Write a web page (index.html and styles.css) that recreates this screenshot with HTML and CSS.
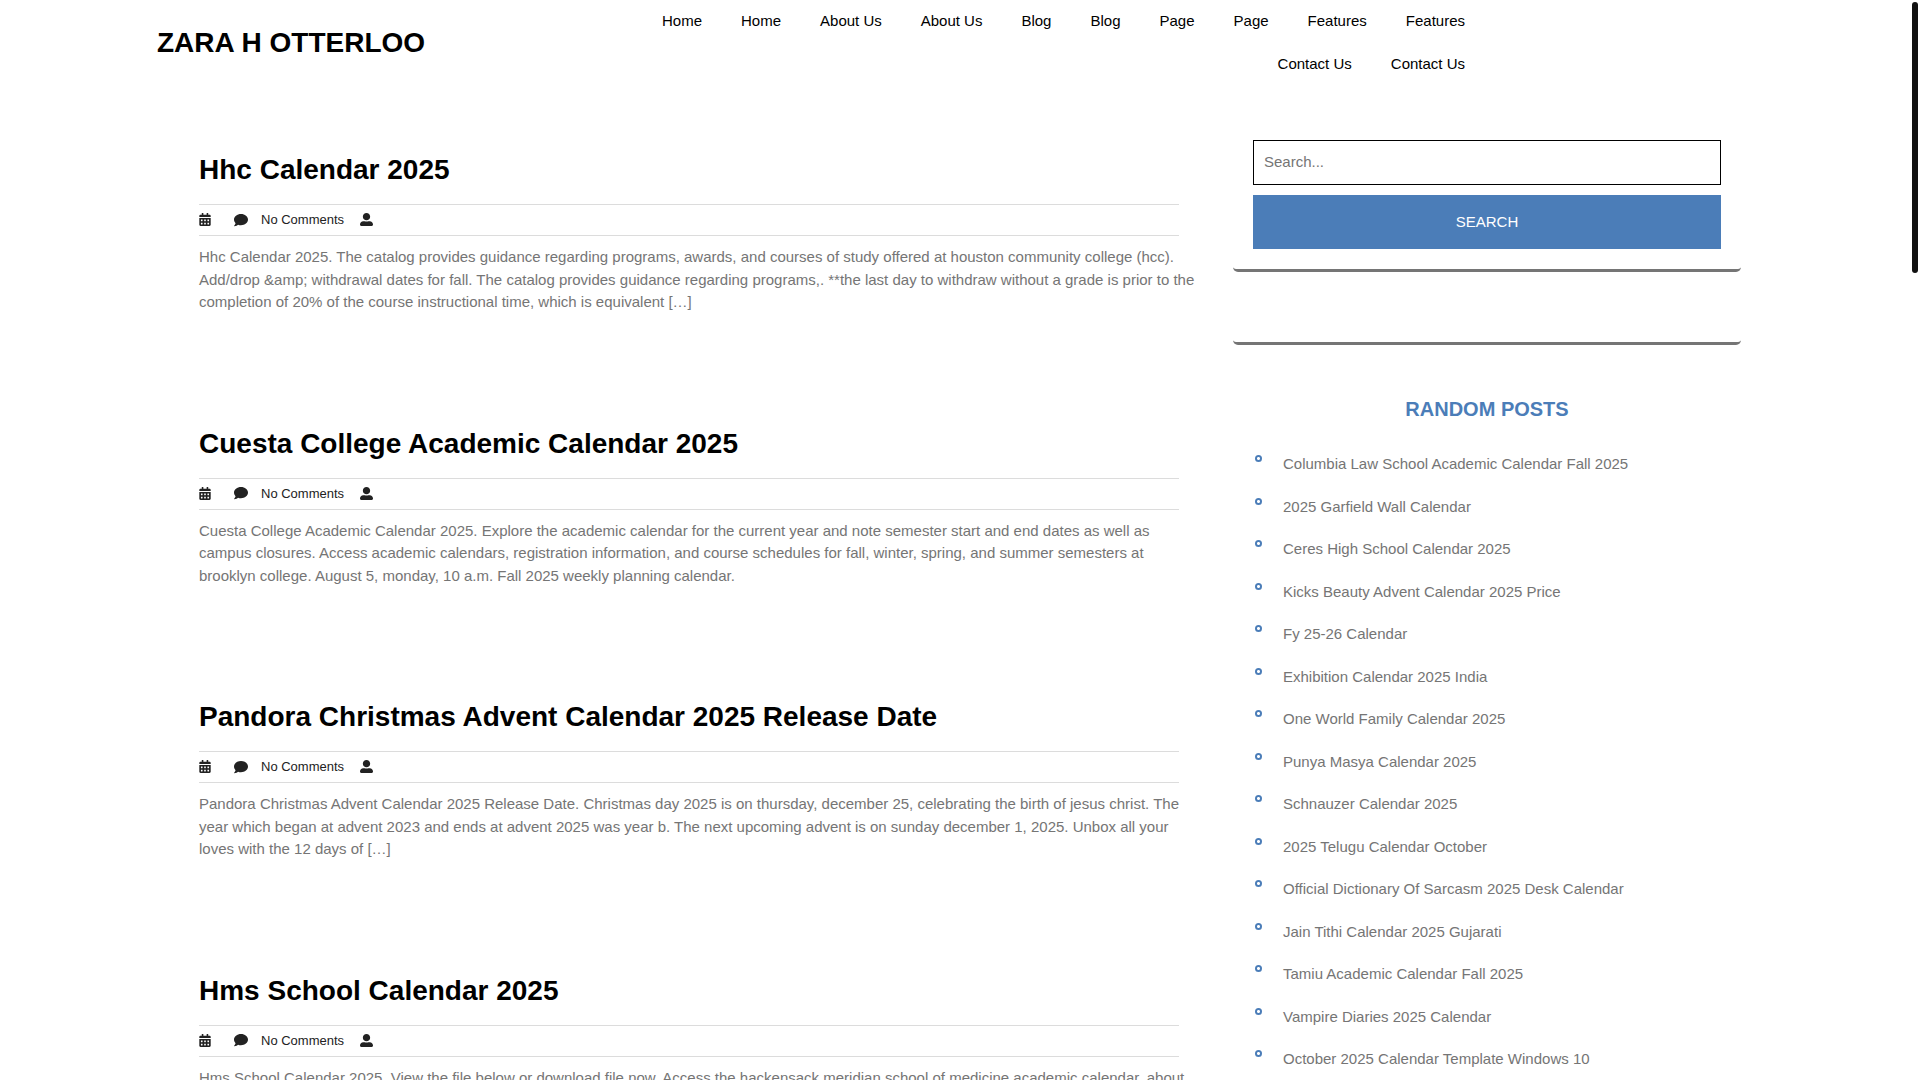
FILE: index.html
```html
<!DOCTYPE html>
<html lang="en">
<head>
<meta charset="utf-8">
<meta name="viewport" content="width=device-width, initial-scale=1">
<title>Zara H Otterloo</title>
<link rel="stylesheet" href="styles.css">
</head>
<body>
<svg class="sprite" aria-hidden="true">
  <symbol id="calendar" viewBox="0 0 448 512"><path d="M0 464c0 26.500 21.500 48 48 48h352c26.500 0 48-21.500 48-48V192H0v272zm320-196c0-6.600 5.400-12 12-12h40c6.600 0 12 5.400 12 12v40c0 6.600-5.400 12-12 12h-40c-6.600 0-12-5.400-12-12v-40zm0 128c0-6.600 5.400-12 12-12h40c6.600 0 12 5.400 12 12v40c0 6.600-5.400 12-12 12h-40c-6.600 0-12-5.400-12-12v-40zM192 268c0-6.600 5.400-12 12-12h40c6.600 0 12 5.400 12 12v40c0 6.600-5.400 12-12 12h-40c-6.600 0-12-5.400-12-12v-40zm0 128c0-6.600 5.400-12 12-12h40c6.600 0 12 5.400 12 12v40c0 6.600-5.400 12-12 12h-40c-6.600 0-12-5.400-12-12v-40zM64 268c0-6.600 5.400-12 12-12h40c6.600 0 12 5.400 12 12v40c0 6.600-5.400 12-12 12H76c-6.600 0-12-5.400-12-12v-40zm0 128c0-6.600 5.400-12 12-12h40c6.600 0 12 5.400 12 12v40c0 6.600-5.400 12-12 12H76c-6.600 0-12-5.400-12-12v-40zM400 64h-48V16c0-8.800-7.200-16-16-16h-32c-8.800 0-16 7.200-16 16v48H160V16c0-8.800-7.200-16-16-16h-32c-8.800 0-16 7.200-16 16v48H48C21.500 64 0 85.500 0 112v48h448v-48c0-26.500-21.500-48-48-48z"/></symbol>
  <symbol id="comment" viewBox="0 0 512 512"><path d="M256 32C114.600 32 0 125.100 0 240c0 49.600 21.400 95 57 130.700C44.500 421.100 2.700 466 2.200 466.500c-2.200 2.300-2.800 5.700-1.500 8.700S4.800 480 8 480c66.300 0 116-31.800 140.600-51.400 32.700 12.300 69 19.400 107.400 19.400 141.400 0 256-93.100 256-208S397.400 32 256 32z"/></symbol>
  <symbol id="user" viewBox="0 0 512 512"><path d="M256 288c79.500 0 144-64.500 144-144S335.500 0 256 0 112 64.500 112 144s64.500 144 144 144zm128 32h-55.100c-22.200 10.200-46.900 16-72.900 16s-50.600-5.800-72.900-16H128C57.300 320 0 377.300 0 448v16c0 26.500 21.500 48 48 48h416c26.500 0 48-21.500 48-48v-16c0-70.700-57.300-128-128-128z"/></symbol>
</svg>

<header class="header">
  <a class="brand" href="#">ZARA H OTTERLOO</a>
  <nav class="nav" aria-label="Primary">
    <a href="#">Home</a><a href="#">Home</a><a href="#">About Us</a><a href="#">About Us</a><a href="#">Blog</a><a href="#">Blog</a><a href="#">Page</a><a href="#">Page</a><a href="#">Features</a><a href="#">Features</a><a href="#">Contact Us</a><a href="#">Contact Us</a>
  </nav>
</header>

<div class="layout">
  <main class="posts">
    <article class="post">
      <h2><a href="#">Hhc Calendar 2025</a></h2>
      <div class="meta"><svg class="date"><use href="#calendar"/></svg><svg class="bubble"><use href="#comment"/></svg><span>No Comments</span><svg><use href="#user"/></svg></div>
      <p>Hhc Calendar 2025. The catalog provides guidance regarding programs, awards, and courses of study offered at houston community college (hcc). Add/drop &amp;amp; withdrawal dates for fall. The catalog provides guidance regarding programs,. **the last day to withdraw without a grade is prior to the completion of 20% of the course instructional time, which is equivalent […]</p>
    </article>
    <article class="post">
      <h2><a href="#">Cuesta College Academic Calendar 2025</a></h2>
      <div class="meta"><svg class="date"><use href="#calendar"/></svg><svg class="bubble"><use href="#comment"/></svg><span>No Comments</span><svg><use href="#user"/></svg></div>
      <p>Cuesta College Academic Calendar 2025. Explore the academic calendar for the current year and note semester start and end dates as well as campus closures. Access academic calendars, registration information, and course schedules for fall, winter, spring, and summer semesters at brooklyn college. August 5, monday, 10 a.m. Fall 2025 weekly planning calendar.</p>
    </article>
    <article class="post">
      <h2><a href="#">Pandora Christmas Advent Calendar 2025 Release Date</a></h2>
      <div class="meta"><svg class="date"><use href="#calendar"/></svg><svg class="bubble"><use href="#comment"/></svg><span>No Comments</span><svg><use href="#user"/></svg></div>
      <p>Pandora Christmas Advent Calendar 2025 Release Date. Christmas day 2025 is on thursday, december 25, celebrating the birth of jesus christ. The year which began at advent 2023 and ends at advent 2025 was year b. The next upcoming advent is on sunday december 1, 2025. Unbox all your loves with the 12 days of […]</p>
    </article>
    <article class="post">
      <h2><a href="#">Hms School Calendar 2025</a></h2>
      <div class="meta"><svg class="date"><use href="#calendar"/></svg><svg class="bubble"><use href="#comment"/></svg><span>No Comments</span><svg><use href="#user"/></svg></div>
      <p>Hms School Calendar 2025. View the file below or download file now. Access the hackensack meridian school of medicine academic calendar, about,</p>
    </article>
  </main>

  <aside class="sidebar">
    <form class="widget search">
      <input type="search" placeholder="Search..." aria-label="Search">
      <button type="submit">SEARCH</button>
    </form>
    <div class="widget blank"></div>
    <section class="widget random">
      <h3>RANDOM POSTS</h3>
      <ul>
        <li><a href="#">Columbia Law School Academic Calendar Fall 2025</a></li>
        <li><a href="#">2025 Garfield Wall Calendar</a></li>
        <li><a href="#">Ceres High School Calendar 2025</a></li>
        <li><a href="#">Kicks Beauty Advent Calendar 2025 Price</a></li>
        <li><a href="#">Fy 25-26 Calendar</a></li>
        <li><a href="#">Exhibition Calendar 2025 India</a></li>
        <li><a href="#">One World Family Calendar 2025</a></li>
        <li><a href="#">Punya Masya Calendar 2025</a></li>
        <li><a href="#">Schnauzer Calendar 2025</a></li>
        <li><a href="#">2025 Telugu Calendar October</a></li>
        <li><a href="#">Official Dictionary Of Sarcasm 2025 Desk Calendar</a></li>
        <li><a href="#">Jain Tithi Calendar 2025 Gujarati</a></li>
        <li><a href="#">Tamiu Academic Calendar Fall 2025</a></li>
        <li><a href="#">Vampire Diaries 2025 Calendar</a></li>
        <li><a href="#">October 2025 Calendar Template Windows 10</a></li>
      </ul>
    </section>
  </aside>
</div>
<div class="scroll-thumb" aria-hidden="true"></div>
</body>
</html>
```

FILE: styles.css
```css
*, *::before { box-sizing: border-box; }

body {
  margin: 0;
  height: 100vh;
  overflow: hidden;
  background: #fff;
  color: #757575;
  font: 15px/1.5 "Liberation Sans", Arial, sans-serif;
}

a { color: inherit; text-decoration: none; }
h2, h3, p, ul { margin: 0; padding: 0; }
.sprite { display: none; }

.header {
  display: grid;
  grid-template-columns: 1fr 3fr;
  align-items: center;
  padding: 0 455px 0 157px;
  color: #000;
}
.brand { font-size: 28px; font-weight: bold; white-space: nowrap; }
.nav {
  display: flex;
  flex-wrap: wrap;
  justify-content: flex-end;
  justify-self: end;
  max-width: 860px;
  column-gap: 39px;
}
.nav a { padding: 10px 0; }

.layout {
  display: grid;
  grid-template-columns: minmax(0, 1fr) 508px;
  gap: 54px;
  align-items: start;
  padding: 35px 179px 0 199px;
}

.post { padding: 30px 0 80px; }
.post h2 {
  margin-bottom: 14px;
  color: #000;
  font-size: 28px;
  line-height: 40px;
}
.post p { margin-right: -20px; }
.meta {
  display: flex;
  align-items: center;
  height: 32px;
  margin-bottom: 10px;
  border: 1px solid #dcdcdc;
  border-width: 1px 0;
  color: #222;
  font-size: 13px;
}
.meta svg { width: 13px; height: 13px; margin-bottom: 1px; fill: #222; }
.meta .date { width: 12px; margin-right: 23px; }
.meta .bubble { width: 14px; height: 14px; }
.meta span { margin: 0 16px 0 13px; }

.widget {
  padding: 20px;
  border-bottom: 3px solid #757575;
  border-radius: 5px;
}
.search { display: grid; gap: 10px; }
.search input, .search button {
  width: 100%;
  border-radius: 0;
  font: inherit;
}
.search input {
  height: 45px;
  padding: 0 10px 2px;
  border: 1px solid #000;
  background: #fff;
  appearance: none;
}
.search input::placeholder { color: #757575; }
.search button {
  height: 54px;
  padding: 0;
  border: 0;
  background: #4b7db8;
  color: #fff;
}
.blank { margin-top: 30px; }
.random { margin-top: 30px; }
.random h3 {
  margin-bottom: 20px;
  color: #4b7db8;
  font-size: 20px;
  line-height: 28px;
  text-align: center;
}
.random ul { list-style: none; }
.random li {
  display: flex;
  align-items: flex-start;
  gap: 21px;
  padding: 10px 0;
}
.random li::before {
  content: "";
  width: 7px;
  height: 7px;
  margin: 2px 0 0 2px;
  border-radius: 50%;
  background: radial-gradient(circle, #fff 1px, #4b7db8 2px);
}

.scroll-thumb {
  position: fixed;
  top: 2px;
  right: 2px;
  width: 6px;
  height: 271px;
  border-radius: 3px;
  background: #111;
}
```
